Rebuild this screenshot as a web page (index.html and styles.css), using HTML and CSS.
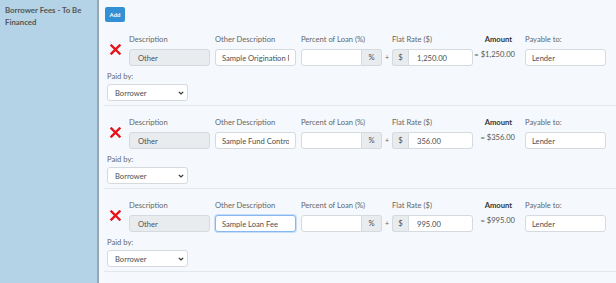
FILE: index.html
```html
<!DOCTYPE html>
<html lang="en">
<head>
  <meta charset="UTF-8" />
  <title>Borrower Fees</title>
  <link rel="stylesheet" href="styles.css">
</head>
<body>
  <div class="page">
    <div class="sidebar">Borrower Fees - To Be Financed</div>

    <div class="main">
      <button class="btn-add">Add</button>

      <div class="fee">
        <div class="fee-line">
          <div class="remove">
            <svg width="11" height="11" viewBox="0 0 11 11"><path d="M1.5 1.5 L9.5 9.5 M9.5 1.5 L1.5 9.5" stroke="#e8141b" stroke-width="2.4" stroke-linecap="square"/></svg>
          </div>
          <div class="field">
            <label>Description</label>
            <input class="input" type="text" value="Other" disabled />
          </div>
          <div class="field">
            <label>Other Description</label>
            <input class="input" type="text" value="Sample Origination Fee" />
          </div>
          <div class="field">
            <label>Percent of Loan (%)</label>
            <div class="group">
              <input class="input" type="text" value="" />
              <span class="addon addon-right">%</span>
            </div>
          </div>
          <span class="op">+</span>
          <div class="field">
            <label>Flat Rate ($)</label>
            <div class="group">
              <span class="addon addon-left">$</span>
              <input class="input" type="text" value="1,250.00" />
            </div>
          </div>
          <div class="field amount">
            <label>Amount</label>
            <span class="amount-value">= $1,250.00</span>
          </div>
          <div class="field">
            <label>Payable to:</label>
            <input class="input" type="text" value="Lender" />
          </div>
        </div>
        <label class="paid-label">Paid by:</label>
        <div class="select-wrap">
          <select class="select"><option>Borrower</option></select>
          <svg class="chevron" width="6" height="4" viewBox="0 0 6 4"><path d="M0.8 0.8 L3 3 L5.2 0.8" fill="none" stroke="#333" stroke-width="1.2"/></svg>
        </div>
      </div>

      <div class="fee">
        <div class="fee-line">
          <div class="remove">
            <svg width="11" height="11" viewBox="0 0 11 11"><path d="M1.5 1.5 L9.5 9.5 M9.5 1.5 L1.5 9.5" stroke="#e8141b" stroke-width="2.4" stroke-linecap="square"/></svg>
          </div>
          <div class="field">
            <label>Description</label>
            <input class="input" type="text" value="Other" disabled />
          </div>
          <div class="field">
            <label>Other Description</label>
            <input class="input" type="text" value="Sample Fund Control Fee" />
          </div>
          <div class="field">
            <label>Percent of Loan (%)</label>
            <div class="group">
              <input class="input" type="text" value="" />
              <span class="addon addon-right">%</span>
            </div>
          </div>
          <span class="op">+</span>
          <div class="field">
            <label>Flat Rate ($)</label>
            <div class="group">
              <span class="addon addon-left">$</span>
              <input class="input" type="text" value="356.00" />
            </div>
          </div>
          <div class="field amount">
            <label>Amount</label>
            <span class="amount-value">= $356.00</span>
          </div>
          <div class="field">
            <label>Payable to:</label>
            <input class="input" type="text" value="Lender" />
          </div>
        </div>
        <label class="paid-label">Paid by:</label>
        <div class="select-wrap">
          <select class="select"><option>Borrower</option></select>
          <svg class="chevron" width="6" height="4" viewBox="0 0 6 4"><path d="M0.8 0.8 L3 3 L5.2 0.8" fill="none" stroke="#333" stroke-width="1.2"/></svg>
        </div>
      </div>

      <div class="fee">
        <div class="fee-line">
          <div class="remove">
            <svg width="11" height="11" viewBox="0 0 11 11"><path d="M1.5 1.5 L9.5 9.5 M9.5 1.5 L1.5 9.5" stroke="#e8141b" stroke-width="2.4" stroke-linecap="square"/></svg>
          </div>
          <div class="field">
            <label>Description</label>
            <input class="input" type="text" value="Other" disabled />
          </div>
          <div class="field">
            <label>Other Description</label>
            <input class="input focused" type="text" value="Sample Loan Fee" />
          </div>
          <div class="field">
            <label>Percent of Loan (%)</label>
            <div class="group">
              <input class="input" type="text" value="" />
              <span class="addon addon-right">%</span>
            </div>
          </div>
          <span class="op">+</span>
          <div class="field">
            <label>Flat Rate ($)</label>
            <div class="group">
              <span class="addon addon-left">$</span>
              <input class="input" type="text" value="995.00" />
            </div>
          </div>
          <div class="field amount">
            <label>Amount</label>
            <span class="amount-value">= $995.00</span>
          </div>
          <div class="field">
            <label>Payable to:</label>
            <input class="input" type="text" value="Lender" />
          </div>
        </div>
        <label class="paid-label">Paid by:</label>
        <div class="select-wrap">
          <select class="select"><option>Borrower</option></select>
          <svg class="chevron" width="6" height="4" viewBox="0 0 6 4"><path d="M0.8 0.8 L3 3 L5.2 0.8" fill="none" stroke="#333" stroke-width="1.2"/></svg>
        </div>
      </div>
    </div>
  </div>
</body>
</html>
```

FILE: styles.css
```css
body {
  margin: 0;
  font-family: Lato, "Open Sans", Arial, sans-serif;
  font-size: 7.6px;
  color: #666;
}

.page {
  display: flex;
  height: 100vh;
  overflow: hidden;
}

.sidebar {
  width: 92px;
  flex-shrink: 0;
  padding: 4px 0 0 5px;
  background: #b4d3e6;
  border-right: 2px solid #97a7b2;
  font-size: 7.8px;
  font-weight: bold;
  line-height: 12px;
  color: #555;
}

.main {
  flex: 1;
  background: #f5f9fd;
  padding: 7px 0 0 5px;
}

.btn-add {
  display: block;
  margin: 0 0 1px 1px;
  width: 20px;
  height: 15px;
  padding: 0;
  border: none;
  border-radius: 2px;
  background: #3490d4;
  color: #fff;
  font-family: inherit;
  font-size: 6px;
  font-weight: bold;
}

.fee {
  padding: 11px 0 4px 3px;
  border-bottom: 1px solid #e2e7ec;
}

.fee-line {
  display: flex;
  align-items: flex-start;
}

.remove {
  width: 22px;
  padding: 10px 0 0 3px;
  box-sizing: border-box;
}

.field {
  display: flex;
  flex-direction: column;
  width: 81px;
  margin-right: 5px;
}

.field label,
.paid-label {
  display: block;
  line-height: 10px;
  margin-bottom: 5px;
  white-space: nowrap;
}

.input {
  box-sizing: border-box;
  width: 100%;
  height: 17px;
  margin: 0;
  padding: 0 6px;
  border: 1px solid #d5dade;
  border-radius: 3px;
  background: #fff;
  font-family: inherit;
  font-size: 7.6px;
  color: #495057;
}

.input:disabled {
  background: #e9ecef;
  color: #495057;
  padding-left: 8px;
}

.input.focused {
  border-color: #86b7ef;
  box-shadow: 0 0 0 1px #c9def6;
}

.group {
  display: flex;
  height: 17px;
}

.group .input {
  flex: 1;
  min-width: 0;
}

.addon {
  box-sizing: border-box;
  width: 20px;
  height: 17px;
  line-height: 15px;
  text-align: center;
  background: #e9ecef;
  border: 1px solid #d5dade;
  color: #495057;
}

.addon-right {
  border-left: none;
  border-radius: 0 3px 3px 0;
}

.group .input:first-child {
  border-radius: 3px 0 0 3px;
}

.addon-left {
  width: 16px;
  border-right: none;
  border-radius: 3px 0 0 3px;
}

.addon-left + .input {
  border-radius: 0 3px 3px 0;
  padding-left: 8px;
}

.op {
  width: 10px;
  margin: 18px 0 0 -5px;
  text-align: center;
  font-size: 7px;
  line-height: 10px;
}

.amount {
  width: 47px;
  margin-left: -5px;
  align-items: flex-end;
}

.amount label {
  font-weight: bold;
  color: #333;
  margin-right: 8px;
}

.amount-value {
  line-height: 10px;
  color: #555;
  white-space: nowrap;
  margin-right: 5px;
}

.paid-label {
  margin: 5px 0 3px;
}

.select-wrap {
  position: relative;
  width: 81px;
}

.select {
  box-sizing: border-box;
  display: block;
  width: 100%;
  height: 17px;
  padding: 0 7px;
  border: 1px solid #d5dade;
  border-radius: 3px;
  background: #fff;
  appearance: none;
  font-family: inherit;
  font-size: 7.6px;
  color: #495057;
}

.chevron {
  position: absolute;
  right: 4px;
  top: 7px;
}
```
